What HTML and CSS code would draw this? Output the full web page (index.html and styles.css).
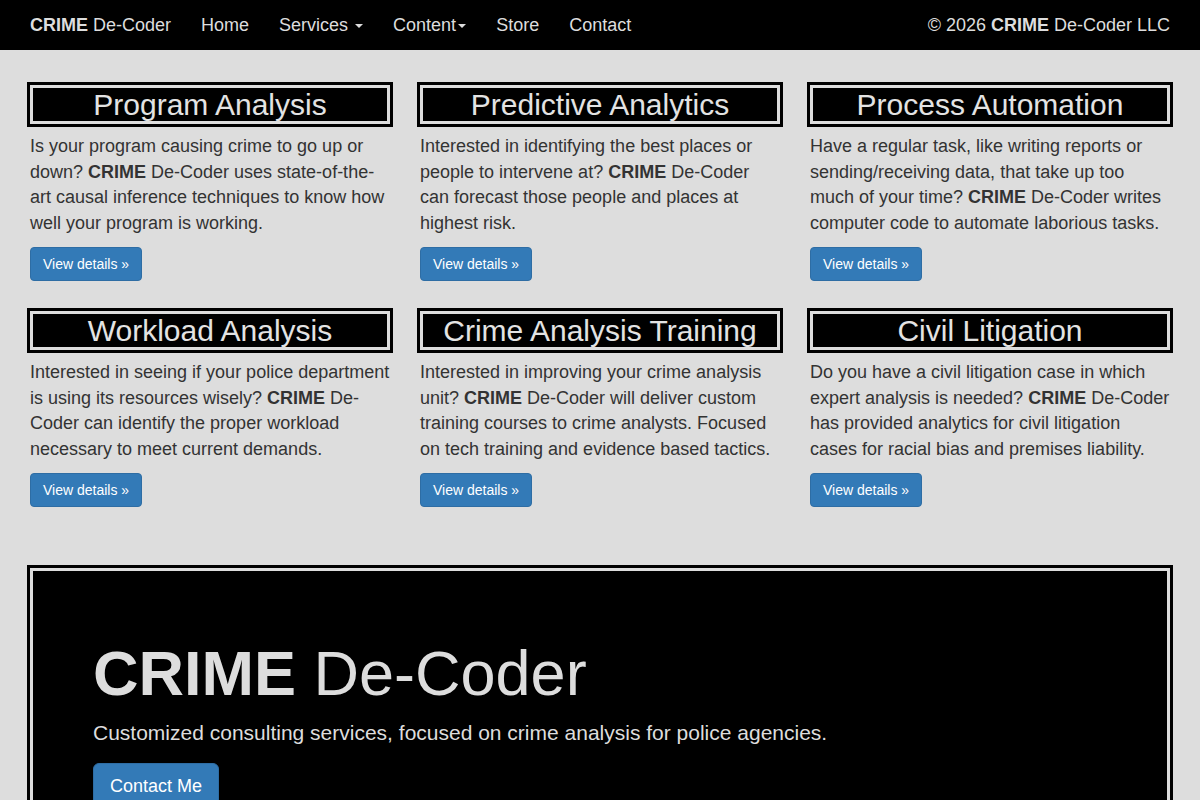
FILE: index.html
```html
<!DOCTYPE html>
<html lang="en">
<head>
  <meta charset="UTF-8" />
  <title>CRIME De-Coder</title>
  <link rel="stylesheet" href="styles.css">
</head>
<body>
  <nav class="topbar">
    <div class="nav-left">
      <a class="brand" href="#"><b>CRIME</b> De-Coder</a>
      <a class="nav-link" href="#">Home</a>
      <a class="nav-link" href="#">Services <span class="caret"></span></a>
      <a class="nav-link" href="#">Content<span class="caret"></span></a>
      <a class="nav-link" href="#">Store</a>
      <a class="nav-link" href="#">Contact</a>
    </div>
    <div class="nav-right">&copy; 2026 <b>CRIME</b> De-Coder LLC</div>
  </nav>

  <main class="container">
    <div class="services">
      <div class="service">
        <h2>Program Analysis</h2>
        <p>Is your program causing crime to go up or down? <b>CRIME</b> De-Coder uses state-of-the-art causal inference techniques to know how well your program is working.</p>
        <p><a class="btn" href="#">View details &raquo;</a></p>
      </div>
      <div class="service">
        <h2>Predictive Analytics</h2>
        <p>Interested in identifying the best places or people to intervene at? <b>CRIME</b> De-Coder can forecast those people and places at highest risk.</p>
        <p><a class="btn" href="#">View details &raquo;</a></p>
      </div>
      <div class="service">
        <h2>Process Automation</h2>
        <p>Have a regular task, like writing reports or sending/receiving data, that take up too much of your time? <b>CRIME</b> De-Coder writes computer code to automate laborious tasks.</p>
        <p><a class="btn" href="#">View details &raquo;</a></p>
      </div>
      <div class="service">
        <h2>Workload Analysis</h2>
        <p>Interested in seeing if your police department is using its resources wisely? <b>CRIME</b> De-Coder can identify the proper workload necessary to meet current demands.</p>
        <p><a class="btn" href="#">View details &raquo;</a></p>
      </div>
      <div class="service">
        <h2>Crime Analysis Training</h2>
        <p>Interested in improving your crime analysis unit? <b>CRIME</b> De-Coder will deliver custom training courses to crime analysts. Focused on tech training and evidence based tactics.</p>
        <p><a class="btn" href="#">View details &raquo;</a></p>
      </div>
      <div class="service">
        <h2>Civil Litigation</h2>
        <p>Do you have a civil litigation case in which expert analysis is needed? <b>CRIME</b> De-Coder has provided analytics for civil litigation cases for racial bias and premises liability.</p>
        <p><a class="btn" href="#">View details &raquo;</a></p>
      </div>
    </div>

    <div class="jumbotron">
      <h1><b>CRIME</b> De-Coder</h1>
      <p>Customized consulting services, focused on crime analysis for police agencies.</p>
      <p><a class="btn btn-lg" href="#">Contact Me</a></p>
    </div>
  </main>
</body>
</html>
```

FILE: styles.css
```css
* {
  box-sizing: border-box;
}

body {
  margin: 0;
  font-family: "Liberation Sans", Arial, sans-serif;
  font-size: 18px;
  line-height: 1.42857;
  color: #333;
  background-color: #dddddd;
}

a {
  text-decoration: none;
}

/* top navigation */
.topbar {
  height: 50px;
  background-color: #000;
  color: #dddddd;
  display: flex;
  justify-content: space-between;
  align-items: center;
  padding: 0 15px;
}

.nav-left {
  display: flex;
}

.brand, .nav-link {
  color: #dddddd;
  padding: 15px;
  line-height: 20px;
  font-size: 18px;
}

.caret {
  display: inline-block;
  width: 0;
  height: 0;
  margin-left: 2px;
  vertical-align: middle;
  border-top: 4px solid;
  border-left: 4px solid transparent;
  border-right: 4px solid transparent;
}

.nav-right {
  padding: 15px;
  line-height: 20px;
}

/* content */
.container {
  padding: 15px 30px 0;
}

.services {
  display: grid;
  grid-template-columns: repeat(3, 1fr);
  column-gap: 30px;
}

.service h2 {
  margin: 20px 0 10px;
  font-size: 30px;
  font-weight: normal;
  line-height: 1.1;
  text-align: center;
  color: #e3e3e3;
  background-color: #000;
  border: 3px solid #dddddd;
  outline: 3px solid #000;
}

p {
  margin: 0 0 10px;
}

.btn {
  display: inline-block;
  padding: 6px 12px;
  font-size: 14px;
  line-height: 20px;
  color: #fff;
  background-color: #337ab7;
  border: 1px solid #2e6da4;
  border-radius: 4px;
}

.btn-lg {
  padding: 10px 16px;
  font-size: 18px;
  line-height: 24px;
  border-radius: 6px;
}

.jumbotron {
  margin-top: 51px;
  padding: 48px 60px;
  background-color: #000;
  color: #dddddd;
  border: 3px solid #dddddd;
  outline: 3px solid #000;
}

.jumbotron h1 {
  margin: 20px 0 10px;
  font-size: 63px;
  font-weight: normal;
  line-height: 1.1;
}

.jumbotron p {
  font-size: 21px;
  margin-bottom: 15px;
}

.jumbotron .btn {
  color: #fff;
}
```
